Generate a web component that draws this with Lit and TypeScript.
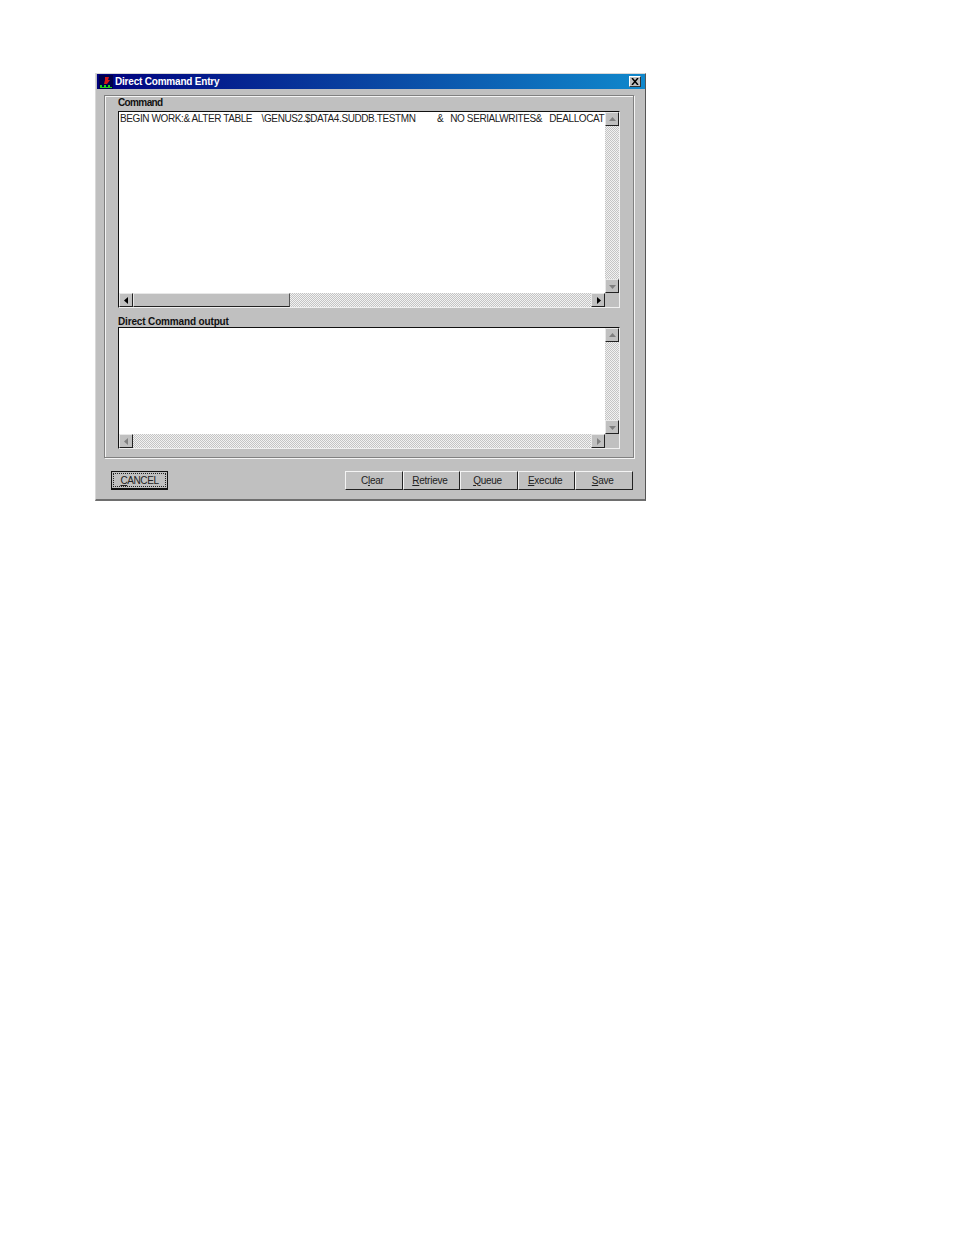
import { LitElement, html, css, svg } from "lit";
import { customElement } from "lit/decorators.js";

type Dir = "up" | "down" | "left" | "right";
const tri: Record<Dir, string> = {
  up: "M4.5 2 L1 6 H8 Z",
  down: "M1 3 H8 L4.5 7 Z",
  left: "M6 1 V8 L2 4.5 Z",
  right: "M3 1 V8 L7 4.5 Z",
};

@customElement("app-root")
export class AppRoot extends LitElement {
  static styles = css`
    :host { display: block; width: 954px; height: 1235px; background: #fff; padding: 73px 0 0 95px; box-sizing: border-box; font-family: "Liberation Sans", Arial, sans-serif; color: #111; }
    .win { width: 551px; height: 428px; box-sizing: border-box; background: #c0c0c0; border-bottom: 2px solid #6e6e6e; border-right: 1px solid #555; border-left: 1px solid #d8d8d8; border-top: 1px solid #d8d8d8; display: flex; flex-direction: column; }
    .title { height: 15px; margin: 0 0 0 1px; background: linear-gradient(90deg, #00007e 0%, #0a4ca6 55%, #1088cc 100%); display: flex; align-items: center; color: #fff; font-weight: 700; font-size: 10px; letter-spacing: -.2px; padding: 0 4px 0 2px; box-sizing: border-box; flex: none; }
    .appicon { width: 14px; height: 14px; margin: 0 2px 0 0; flex: none; display: block; }
    .close { margin: 0 0 0 auto; width: 12px; height: 11px; background: #c0c0c0; box-sizing: border-box; border: 1px solid; border-color: #fff #333 #333 #fff; display: flex; align-items: center; justify-content: center; }
    .group { margin: 6px 11px 0 8px; height: 363px; box-sizing: border-box; border: 1px solid #808080; box-shadow: inset 1px 1px 0 #f4f4f4, 1px 1px 0 #f4f4f4; padding: 3px 13px 0 13px; flex: none; display: flex; flex-direction: column; }
    .lbl { font-weight: 700; font-size: 10px; line-height: 12px; height: 12px; letter-spacing: -.62px; transform: translateY(-2px); }
    .lbl.second { margin-top: 7px; letter-spacing: -.15px; transform: translateY(1px); }
    .box { width: 502px; box-sizing: border-box; border-top: 1px solid #111; border-left: 1px solid #111; border-right: 1px solid #f0f0f0; border-bottom: 1px solid #f0f0f0; background: #fff; display: grid; grid-template-columns: 1fr 14px; flex: none; }
    .box.a { height: 197px; grid-template-rows: 1fr 14px; }
    .box.b { height: 122px; grid-template-rows: 1fr 14px; }
    .text { white-space: pre; font-size: 10px; letter-spacing: -.4px; line-height: 12px; padding: 1px 0 0 1px; color: #222; min-width: 0; }
    .vbar { background: repeating-conic-gradient(#c4c4c4 0 25%, #f2f2f2 0 50%) 0 0 / 2px 2px; display: flex; flex-direction: column; justify-content: space-between; }
    .hbar { background: repeating-conic-gradient(#c4c4c4 0 25%, #f2f2f2 0 50%) 0 0 / 2px 2px; display: flex; justify-content: space-between; }
    .corner { background: #c0c0c0; }
    .btn { width: 14px; height: 14px; flex: none; background: #c0c0c0; box-sizing: border-box; border: 1px solid; border-color: #e8e8e8 #222 #222 #e8e8e8; display: flex; align-items: center; justify-content: center; }
    .btn svg { width: 9px; height: 9px; display: block; }
    .thumb { width: 157px; height: 14px; box-sizing: border-box; background: #c0c0c0; border: 1px solid; border-color: #e8e8e8 #555 #222 #e8e8e8; margin-right: auto; flex: none; }
    .footer { display: flex; align-items: flex-start; margin: 13px 12px 0 15px; }
    .cmd { height: 19px; box-sizing: border-box; padding-bottom: 1px; background: #c0c0c0; border: 1px solid; border-color: #f4f4f4 #222 #222 #f4f4f4; font-size: 10px; letter-spacing: -.25px; color: #222; display: flex; align-items: center; justify-content: center; flex: none; }
    .cancel { width: 57px; border: 1px solid #111; border-bottom-width: 2px; position: relative; padding-bottom: 0; letter-spacing: -.4px; }
    .cancel::after { content: ""; position: absolute; inset: 1px; border: 1px dotted #222; }
    .right { margin-left: auto; display: flex; }
    .w { width: 57.6px; padding-right: 3px; }
  `;

  private arrow(d: Dir, color: string) {
    return html`<div class="btn"><svg viewBox="0 0 9 9">${svg`<path d=${tri[d]} fill=${color}></path>`}</svg></div>`;
  }

  render() {
    const line = "BEGIN WORK:& ALTER TABLE    \\GENUS2.$DATA4.SUDDB.TESTMN         &   NO SERIALWRITES&   DEALLOCAT";
    return html`
      <div class="win">
        <div class="title">
          <svg class="appicon" viewBox="0 0 14 14">
            <rect width="14" height="14" fill="#00004a"></rect>
            <path d="M6 2 L10 2 L9 5 L11 5 L8 9 L5 9 L6 5 Z" fill="#d81818"></path>
            <path d="M1 13 V10 H3 V12 H5 V10 H7 V12 H9 V10 H11 V12 H13 V13 Z" fill="#20d020"></path>
          </svg>
          <span>Direct Command Entry</span>
          <div class="close">
            <svg width="8" height="7" viewBox="0 0 8 7"><path d="M1 0 L7 7 M7 0 L1 7" stroke="#000" stroke-width="1.5"></path></svg>
          </div>
        </div>
        <div class="group">
          <div class="lbl">Command</div>
          <div class="box a">
            <div class="text">${line}</div>
            <div class="vbar">${this.arrow("up", "#808080")}${this.arrow("down", "#808080")}</div>
            <div class="hbar">${this.arrow("left", "#000")}<div class="thumb"></div>${this.arrow("right", "#000")}</div>
            <div class="corner"></div>
          </div>
          <div class="lbl second">Direct Command output</div>
          <div class="box b">
            <div class="text"></div>
            <div class="vbar">${this.arrow("up", "#808080")}${this.arrow("down", "#808080")}</div>
            <div class="hbar">${this.arrow("left", "#808080")}${this.arrow("right", "#808080")}</div>
            <div class="corner"></div>
          </div>
        </div>
        <div class="footer">
          <div class="cmd cancel"><span><u>C</u>ANCEL</span></div>
          <div class="right">
            <div class="cmd w"><span>C<u>l</u>ear</span></div>
            <div class="cmd w"><span><u>R</u>etrieve</span></div>
            <div class="cmd w"><span><u>Q</u>ueue</span></div>
            <div class="cmd w"><span><u>E</u>xecute</span></div>
            <div class="cmd w"><span><u>S</u>ave</span></div>
          </div>
        </div>
      </div>
    `;
  }
}
